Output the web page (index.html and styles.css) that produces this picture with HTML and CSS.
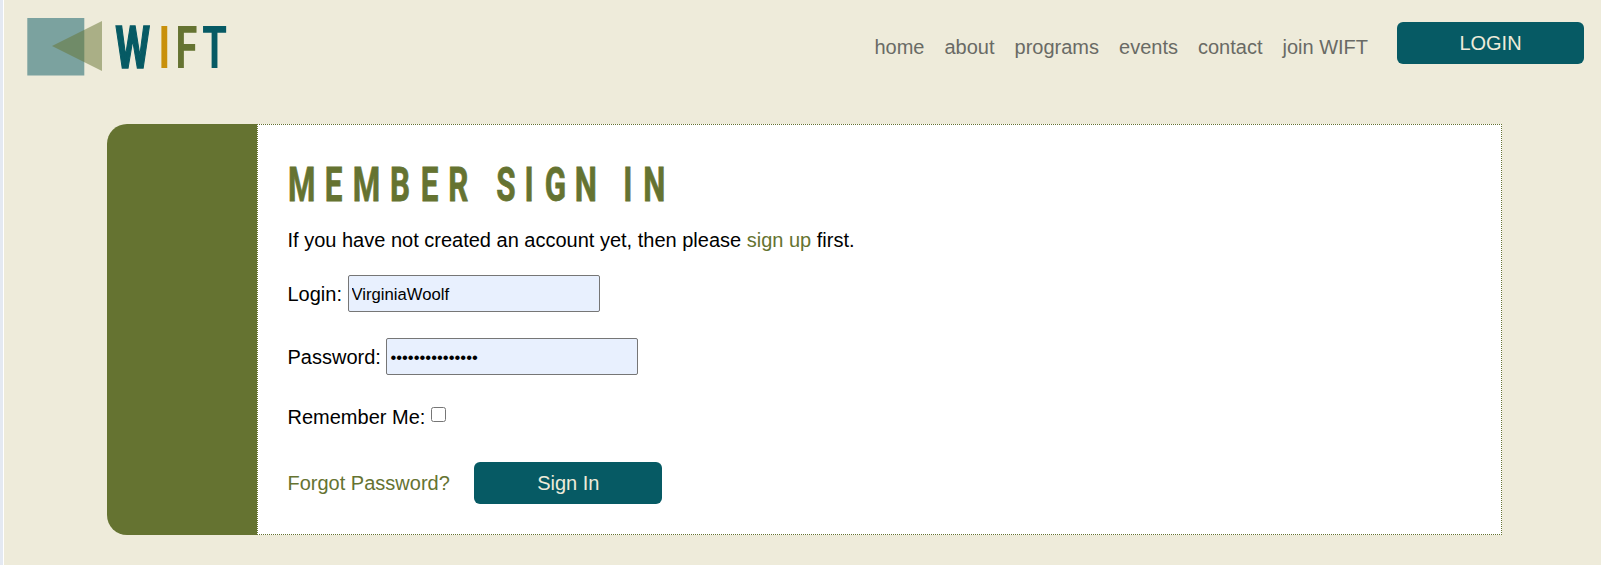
FILE: index.html
```html
<!DOCTYPE html>
<html lang="en">
<head>
<meta charset="utf-8">
<title>WIFT - Member Sign In</title>
<link rel="stylesheet" href="styles.css">
</head>
<body>
<header class="header">
  <a class="logo" href="#">
    <svg width="212" height="70" viewBox="26 10 212 70">
      <rect x="27.3" y="18" width="57" height="57.5" fill="#7ba29f"/>
      <path d="M52 46 102 21V71Z" fill="#657331" fill-opacity=".5"/>
      <text class="logo-text" transform="scale(.68 1)" y="67.7"><tspan x="169.5" fill="#065a64" stroke="#065a64" stroke-width="1.5">W</tspan><tspan x="233" fill="#c8900b">I</tspan><tspan x="258" fill="#657331">F</tspan><tspan x="297.5" fill="#065a64">T</tspan></text>
    </svg>
  </a>
  <nav class="nav">
    <a href="#">home</a>
    <a href="#">about</a>
    <a href="#">programs</a>
    <a href="#">events</a>
    <a href="#">contact</a>
    <a href="#">join WIFT</a>
  </nav>
  <a class="button login" href="#">LOGIN</a>
</header>
<main class="panel">
  <div class="accent"></div>
  <section class="content">
    <h1 class="title">
      <svg width="390" height="60" viewBox="0 -9 390 60">
        <text class="title-text" transform="scale(.64 1)" y="38.5" x="0 57.5 101 159.5 207.5 250.5 300 325.5 369.5 401 448 500 524 555">MEMBER SIGN IN</text>
      </svg>
    </h1>
    <p class="intro">If you have not created an account yet, then please <a href="#">sign up</a> first.</p>
    <form class="form">
      <label class="row">Login: <input class="field" type="text" value="VirginiaWoolf"></label>
      <label class="row">Password: <input class="field" type="password" value="aroomofonesown1"></label>
      <label class="row remember">Remember Me: <input class="check" type="checkbox"></label>
      <div class="actions">
        <a href="#">Forgot Password?</a>
        <button class="button" type="button">Sign In</button>
      </div>
    </form>
  </section>
</main>
</body>
</html>
```
FILE: styles.css
```css
* { box-sizing: border-box; }
body {
  margin: 0;
  height: 565px;
  overflow: hidden;
  border-left: 3px solid #e4e9f2;
  box-shadow: inset 1px 0 #fff;
  background: #eeebda;
  color: #000;
  font: 20px/24px "Liberation Sans", Arial, sans-serif;
}
a { color: #657331; text-decoration: none; }
.header {
  display: flex;
  align-items: flex-start;
  height: 124px;
  padding: 10px 17px 0 23px;
}
.logo svg { display: block; overflow: visible; }
.logo-text { font: bold 58.6px Roboto, sans-serif; }
.nav {
  display: flex;
  gap: 20px;
  margin: 25px 29px 0 auto;
}
.nav a { color: #696a65; }
.button {
  width: 188px;
  height: 42px;
  padding: 0;
  border: 0;
  border-radius: 6px;
  background: #065a64;
  color: #eeebda;
  font: inherit;
  line-height: 42px;
  text-align: center;
}
.login { width: 187px; margin-top: 12px; }
.panel {
  display: flex;
  width: 1395px;
  height: 411px;
  margin-left: 104px;
}
.accent {
  width: 150px;
  border-radius: 20px 0 0 20px;
  background: #657331;
}
.content {
  flex: 1;
  padding: 28px 29px 0 29.5px;
  border: 1px dotted #657331;
  background: #fff;
}
.title { margin: 0; height: 60px; }
.title svg { display: block; overflow: visible; }
.title-text {
  font: bold 49px Roboto, sans-serif;
  fill: #657331;
  stroke: #657331;
  stroke-width: .8px;
}
.intro { margin: 15px 0 23px; }
.row {
  display: flex;
  align-items: center;
  gap: 5.5px;
  height: 37px;
  margin-bottom: 26px;
}
.field {
  width: 252px;
  height: 37px;
  margin: 0;
  padding: 3px 3px 1px;
  border: 1px solid #767676;
  border-radius: 2px;
  background: #e8f0fe;
  color: #000;
  font: 16.67px "Liberation Sans", Arial, sans-serif;
}
.remember { margin: -3px 0 27px; }
.check { width: 15px; height: 15px; margin: 0 0 4px; }
.actions {
  display: flex;
  align-items: center;
  gap: 24.5px;
}
```
